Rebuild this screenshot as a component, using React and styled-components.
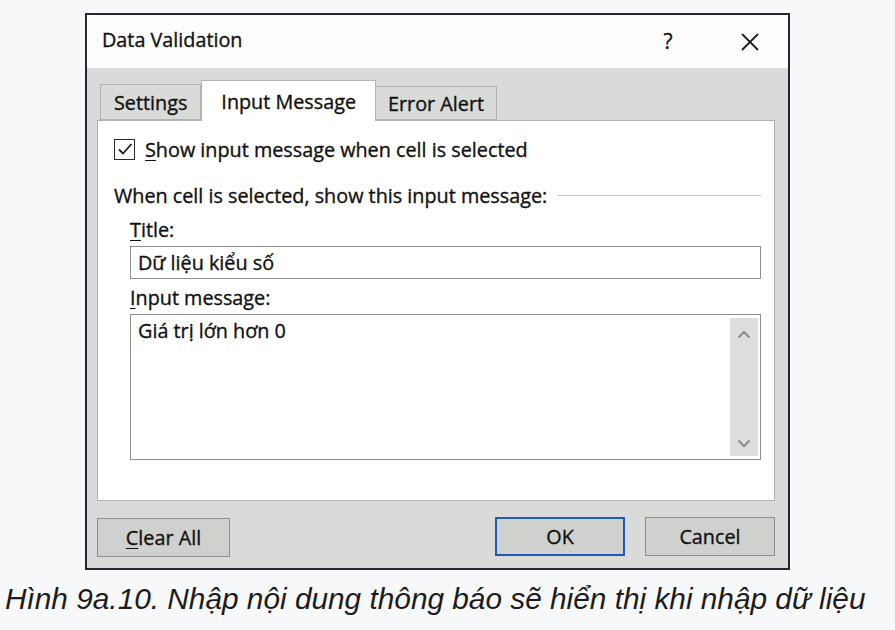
import React from "react";
import styled, { createGlobalStyle } from "styled-components";

const Global = createGlobalStyle`
  html, body { margin: 0; padding: 0; background: #f7f8f9; }
  body { width: 895px; height: 630px; overflow: hidden; }
  * { box-sizing: border-box; }
`;

const UI = `"Open Sans", "Noto Sans", "DejaVu Sans", sans-serif`;

const Page = styled.div`
  display: flex;
  flex-direction: column;
  padding-top: 13px;
`;

const Dialog = styled.div`
  margin-left: 85px;
  width: 705px;
  height: 557px;
  border: 2px solid #262735;
  background: #d9dbd9;
  display: flex;
  flex-direction: column;
  font-family: ${UI};
  font-size: 19.8px;
  color: #111111;
  -webkit-text-stroke: 0.35px #111111;
`;

const TitleBar = styled.div`
  height: 53px;
  background: #fdfdfd;
  display: flex;
  align-items: center;
  padding: 0 28px 0 15px;
`;

const TitleText = styled.div`
  flex: 1;
  margin-top: -4px;
`;

const HelpGlyph = styled.div`
  font-size: 21px;
  width: 20px;
  text-align: center;
  margin-right: 62px;
  margin-top: -2px;
`;

const Body = styled.div`
  display: flex;
  flex-direction: column;
  padding: 0 13px 0 10px;
`;

const TabStrip = styled.div`
  display: flex;
  align-items: flex-end;
  height: 52px;
  padding-left: 4px;
`;

const Tab = styled.div`
  height: ${(p) => p.$h}px;
  padding: 0 ${(p) => p.$pad}px;
  display: flex;
  align-items: center;
  background: ${(p) => (p.$active ? "#ffffff" : "#d9dbd9")};
  border: 1px solid #b2b4b2;
  border-bottom: ${(p) => (p.$active ? "none" : "1px solid #b2b4b2")};
  margin-bottom: ${(p) => (p.$active ? "-1px" : "0")};
  margin-left: ${(p) => (p.$active ? "0" : "-1px")};
  position: relative;
  z-index: ${(p) => (p.$active ? 2 : 1)};
`;

const Panel = styled.div`
  height: 381px;
  background: #ffffff;
  border: 1px solid #b2b4b2;
  display: flex;
  flex-direction: column;
  padding: 17px 13px 0 16px;
`;

const CheckRow = styled.div`
  display: flex;
  align-items: center;
  height: 22px;
  gap: 10px;
`;

const Box = styled.div`
  width: 21px;
  height: 21px;
  border: 1.5px solid #2a2a2a;
  display: flex;
  align-items: center;
  justify-content: center;
`;

const Label = styled.div`
  height: 24px;
  line-height: 24px;
  margin-top: ${(p) => p.$mt || 0}px;
  margin-left: ${(p) => p.$indent || 0}px;
  white-space: nowrap;
`;

const GroupHeader = styled.div`
  display: flex;
  align-items: center;
  height: 24px;
  margin-top: 23px;
  white-space: nowrap;
`;

const Rule = styled.div`
  flex: 1;
  height: 1px;
  background: #c4c6c4;
  margin-left: 11px;
`;

const Accel = styled.span`
  text-decoration: underline;
  text-underline-offset: 3px;
`;

const Field = styled.div`
  margin: 4px 0 0 16px;
  height: 33px;
  border: 1px solid #8d8f8d;
  display: flex;
  align-items: center;
  padding-left: 7px;
`;

const Area = styled.div`
  margin: 4px 0 0 16px;
  height: 146px;
  border: 1px solid #8d8f8d;
  display: flex;
  padding: 3px 2px 3px 7px;
`;

const AreaText = styled.div`
  flex: 1;
  line-height: 26px;
`;

const ScrollBar = styled.div`
  width: 28px;
  background: #dcdddc;
  display: flex;
  flex-direction: column;
  justify-content: space-between;
  align-items: center;
  padding: 12px 0 8px;
`;

const Footer = styled.div`
  display: flex;
  justify-content: space-between;
  align-items: flex-start;
  padding: 17px 13px 0 10px;
`;

const ButtonGroup = styled.div`
  display: flex;
  gap: 20px;
  margin-top: -1px;
`;

const Button = styled.div`
  width: ${(p) => p.$w}px;
  height: 39px;
  background: #cfd1cf;
  border: ${(p) => (p.$default ? "2px solid #2059b8" : "1px solid #8c8e8c")};
  display: flex;
  align-items: center;
  justify-content: center;
`;

const Caption = styled.div`
  margin: 12px 0 0 5px;
  font-family: "Liberation Sans", Arial, sans-serif;
  font-style: italic;
  font-size: 29.8px;
  line-height: 34px;
  color: #1c1c1c;
  white-space: nowrap;
`;

const Chevron = ({ up }) => (
  <svg width="14" height="9" viewBox="0 0 14 9">
    <path
      d={up ? "M1.5 7.5 L7 2 L12.5 7.5" : "M1.5 1.5 L7 7 L12.5 1.5"}
      fill="none"
      stroke="#8a8c8a"
      strokeWidth="2"
    />
  </svg>
);

export default function App() {
  return (
    <>
      <Global />
      <Page>
        <Dialog>
          <TitleBar>
            <TitleText>Data Validation</TitleText>
            <HelpGlyph>?</HelpGlyph>
            <svg width="20" height="20" viewBox="0 0 20 20">
              <path d="M2 2 L18 18 M18 2 L2 18" stroke="#1e1e1e" strokeWidth="1.8" fill="none" />
            </svg>
          </TitleBar>
          <Body>
            <TabStrip>
              <Tab $h={36} $pad={13}>Settings</Tab>
              <Tab $h={41} $pad={19} $active>Input Message</Tab>
              <Tab $h={34} $pad={12}>Error Alert</Tab>
            </TabStrip>
            <Panel>
              <CheckRow>
                <Box>
                  <svg width="16" height="14" viewBox="0 0 16 14">
                    <path d="M2 7.5 L6 11.5 L14.5 2" fill="none" stroke="#1e1e1e" strokeWidth="1.8" />
                  </svg>
                </Box>
                <span>
                  <Accel>S</Accel>how input message when cell is selected
                </span>
              </CheckRow>
              <GroupHeader>
                <span>When cell is selected, show this input message:</span>
                <Rule />
              </GroupHeader>
              <Label $mt={11} $indent={16}>
                <Accel>T</Accel>itle:
              </Label>
              <Field>Dữ liệu kiểu số</Field>
              <Label $mt={7} $indent={16}>
                <Accel>I</Accel>nput message:
              </Label>
              <Area>
                <AreaText>Giá trị lớn hơn 0</AreaText>
                <ScrollBar>
                  <Chevron up />
                  <Chevron />
                </ScrollBar>
              </Area>
            </Panel>
          </Body>
          <Footer>
            <Button $w={133}>
              <span>
                <Accel>C</Accel>lear All
              </span>
            </Button>
            <ButtonGroup>
              <Button $w={130} $default>OK</Button>
              <Button $w={130}>Cancel</Button>
            </ButtonGroup>
          </Footer>
        </Dialog>
        <Caption>Hình 9a.10. Nhập nội dung thông báo sẽ hiển thị khi nhập dữ liệu</Caption>
      </Page>
    </>
  );
}
